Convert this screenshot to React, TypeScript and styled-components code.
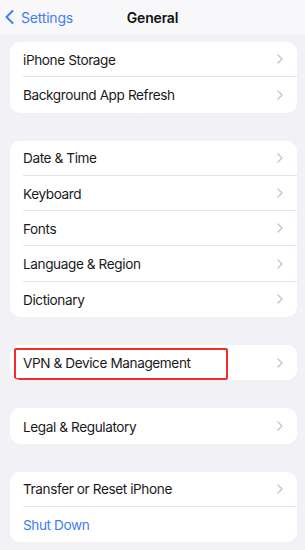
import React from "react";
import styled, { createGlobalStyle } from "styled-components";

const GlobalStyle = createGlobalStyle`
  html, body {
    margin: 0;
    padding: 0;
    background: #f1f1f6;
  }
  body {
    font-family: Inter, "Liberation Sans", Arial, sans-serif;
    -webkit-font-smoothing: antialiased;
  }
`;

const Page = styled.div`
  width: 305px;
  min-height: 550px;
  background: #f1f1f6;
`;

const NavBar = styled.header`
  height: 34px;
  background: #f8f8fa;
  display: grid;
  grid-template-columns: 1fr auto 1fr;
  align-items: center;
`;

const BackButton = styled.div`
  display: flex;
  align-items: center;
  gap: 7px;
  padding-left: 5px;
  color: #3f7ef2;
  font-size: 14px;
  letter-spacing: -0.2px;
`;

const Title = styled.div`
  font-size: 14px;
  font-weight: 600;
  color: #111;
  letter-spacing: -0.2px;
`;

const Content = styled.main`
  padding: 8px 8px 8px 10px;
  display: flex;
  flex-direction: column;
  gap: 28px;
`;

const Group = styled.section`
  background: #fff;
  border-radius: 10px;
  overflow: hidden;
`;

const Row = styled.div<{ $last?: boolean }>`
  position: relative;
  height: 35.3px;
  display: flex;
  align-items: center;
  margin-left: 13px;
  padding-right: 14px;
  border-bottom: ${({ $last }) => ($last ? "none" : "1px solid #e4e4e8")};
  box-sizing: border-box;
`;

const Label = styled.span<{ $link?: boolean }>`
  flex: 1;
  padding-top: 1px;
  font-size: 13.6px;
  letter-spacing: -0.4px;
  color: ${({ $link }) => ($link ? "#3f7ef2" : "#1a1a1c")};
`;

const Highlight = styled.div`
  position: absolute;
  left: -9px;
  top: 3px;
  width: 214px;
  bottom: 0;
  border: 2px solid #f52a2a;
  border-radius: 2px;
  box-sizing: border-box;
  pointer-events: none;
`;

const Chevron = () => (
  <svg width="6" height="10" viewBox="0 0 6 10">
    <path
      d="M1 1 L5 5 L1 9"
      fill="none"
      stroke="#c5c5c9"
      strokeWidth="1.4"
      strokeLinecap="round"
      strokeLinejoin="round"
    />
  </svg>
);

const BackChevron = () => (
  <svg width="9" height="14" viewBox="0 0 9 14">
    <path
      d="M7.5 1 L1.5 7 L7.5 13"
      fill="none"
      stroke="#3f7ef2"
      strokeWidth="2"
      strokeLinecap="round"
      strokeLinejoin="round"
    />
  </svg>
);

type Item = { label: string; link?: boolean; highlight?: boolean };

const groups: Item[][] = [
  [{ label: "iPhone Storage" }, { label: "Background App Refresh" }],
  [
    { label: "Date & Time" },
    { label: "Keyboard" },
    { label: "Fonts" },
    { label: "Language & Region" },
    { label: "Dictionary" },
  ],
  [{ label: "VPN & Device Management", highlight: true }],
  [{ label: "Legal & Regulatory" }],
  [{ label: "Transfer or Reset iPhone" }, { label: "Shut Down", link: true }],
];

export default function App() {
  return (
    <>
      <GlobalStyle />
      <Page>
        <NavBar>
          <BackButton>
            <BackChevron />
            Settings
          </BackButton>
          <Title>General</Title>
          <div />
        </NavBar>
        <Content>
          {groups.map((items, gi) => (
            <Group key={gi}>
              {items.map((item, i) => (
                <Row key={item.label} $last={i === items.length - 1}>
                  {item.highlight && <Highlight />}
                  <Label $link={item.link}>{item.label}</Label>
                  {!item.link && <Chevron />}
                </Row>
              ))}
            </Group>
          ))}
        </Content>
      </Page>
    </>
  );
}
